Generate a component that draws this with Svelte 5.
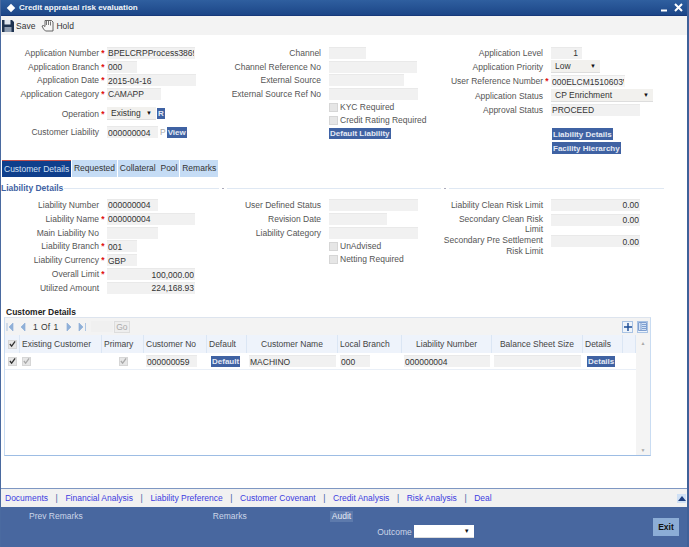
<script>
  const upper1 = [
    { label: 'Application Number', value: 'BPELCRPProcess3869', w: 88, star: true },
    { label: 'Application Branch', value: '000', w: 30, star: true },
    { label: 'Application Date', value: '2015-04-16', w: 89, star: true },
    { label: 'Application Category', value: 'CAMAPP', w: 54, star: true }
  ];
  const upper2 = [
    { label: 'Channel', value: '', w: 37 },
    { label: 'Channel Reference No', value: '', w: 88 },
    { label: 'External Source', value: '', w: 75 },
    { label: 'External Source Ref No', value: '', w: 89 }
  ];
  const lower1 = [
    { label: 'Liability Number', value: '000000004', w: 51 },
    { label: 'Liability Name', value: '000000004', w: 88, star: true },
    { label: 'Main Liability No', value: '', w: 51 },
    { label: 'Liability Branch', value: '001', w: 30, star: true },
    { label: 'Liability Currency', value: 'GBP', w: 30, star: true },
    { label: 'Overall Limit', value: '100,000.00', w: 88, star: true, num: true },
    { label: 'Utilized Amount', value: '224,168.93', w: 88, num: true }
  ];
  const lower2 = [
    { label: 'User Defined Status', value: '', w: 89 },
    { label: 'Revision Date', value: '', w: 58 },
    { label: 'Liability Category', value: '', w: 89 }
  ];
  const tabs = ['Customer Details', 'Requested', 'Collateral', 'Pool', 'Remarks'];
  const headers = ['Existing Customer', 'Primary', 'Customer No', 'Default', 'Customer Name', 'Local Branch', 'Liability Number', 'Balance Sheet Size', 'Details'];
  const links = ['Documents', 'Financial Analysis', 'Liability Preference', 'Customer Covenant', 'Credit Analysis', 'Risk Analysis', 'Deal'];
</script>

{#snippet field(f)}
  <div class="row">
    <span class="label">{f.label}</span>
    <span class="star">{f.star ? '*' : ''}</span>
    <input class="text" class:num={f.num} style="width:{f.w}px" value={f.value} readonly />
  </div>
{/snippet}

{#snippet check(label, on, dark)}
  <div class="check-row">
    <span class="check">
      {#if on}<svg viewBox="0 0 8 8" width="8" height="8"><path d="M1 4l2 2.5L7 1" fill="none" stroke={dark ? '#333' : '#aaa'} stroke-width="1.5" /></svg>{/if}
    </span>
    {#if label}<span>{label}</span>{/if}
  </div>
{/snippet}

<div class="window">
  <header class="title">
    <span class="diamond"></span>
    <span class="title-text">Credit appraisal risk evaluation</span>
    <svg class="win-btns" viewBox="0 0 28 10" width="28" height="10">
      <path d="M2 7.5h6" stroke="#fff" stroke-width="2" />
      <path d="M16 1l7 7M23 1l-7 7" stroke="#fff" stroke-width="2" />
    </svg>
  </header>

  <div class="toolbar">
    <svg viewBox="0 0 12 12" width="12" height="12">
      <path d="M0 0h10l2 2v10H0z" fill="#1e3350" />
      <path d="M2.5 0h6v4.5h-6z" fill="#dfe6ee" />
      <path d="M2.5 7h7v5h-7z" fill="#8d9cb0" />
    </svg>
    <span class="tool-text">Save</span>
    <svg class="hold-icon" viewBox="0 0 13 13" width="13" height="13">
      <path d="M4 1.5h6.5l1.5 1.500v9H4.500L2.500 10 1 7l1.500-.5L4 7.500z" fill="#f6f6f6" stroke="#555" stroke-width="0.9" />
      <path d="M5.500 2v4M7.500 2v4M9.500 2.500v4" stroke="#555" stroke-width="0.8" />
    </svg>
    <span class="tool-text">Hold</span>
  </div>

  <main class="content">
    <section class="cols upper">
      <div class="col">
        {#each upper1 as f}{@render field(f)}{/each}
        <div class="row op-row">
          <span class="label">Operation</span>
          <span class="star">*</span>
          <div class="select op-select"><span>Existing</span><i>▼</i></div>
          <button class="btn r-btn">R</button>
        </div>
        <div class="row cust-row">
          <span class="label">Customer Liability</span>
          <span class="star"></span>
          <input class="text" style="width:51px" value="000000004" readonly />
          <span class="p-mark">P</span>
          <button class="btn view-btn">View</button>
        </div>
      </div>
      <div class="col">
        {#each upper2 as f}{@render field(f)}{/each}
        <div class="checks upper-checks">
          {@render check('KYC Required')}
          {@render check('Credit Rating Required')}
          <button class="btn">Default Liability</button>
        </div>
      </div>
      <div class="col">
        <div class="row">
          <span class="label">Application Level</span><span class="star"></span>
          <input class="text num level" value="1" readonly />
        </div>
        <div class="row tall">
          <span class="label">Application Priority</span><span class="star"></span>
          <div class="select prio-select"><span>Low</span><i>▼</i></div>
        </div>
        <div class="row tall">
          <span class="label">User Reference Number</span><span class="star">*</span>
          <input class="text ref" value="000ELCM1510603W" readonly />
        </div>
        <div class="row">
          <span class="label">Application Status</span><span class="star"></span>
          <div class="select status-select"><span>CP Enrichment</span><i>▼</i></div>
        </div>
        <div class="row tall">
          <span class="label">Approval Status</span><span class="star"></span>
          <input class="text approval" value="PROCEED" readonly />
        </div>
        <div class="side-btns">
          <button class="btn">Liability Details</button>
          <button class="btn">Facility Hierarchy</button>
        </div>
      </div>
    </section>

    <nav class="tabs">
      {#each tabs as t, i}
        <span class="tab" class:active={i === 0}>{t}</span>
      {/each}
    </nav>

    <div class="legend">
      <span>Liability Details</span>
      <i class="rule first"></i>
      <i class="dot"></i>
      <i class="rule second"></i>
      <i class="dot"></i>
      <i class="rule third"></i>
    </div>

    <section class="cols lower">
      <div class="col">
        {#each lower1 as f}{@render field(f)}{/each}
      </div>
      <div class="col">
        {#each lower2 as f}{@render field(f)}{/each}
        <div class="checks">
          {@render check('UnAdvised')}
          {@render check('Netting Required')}
        </div>
      </div>
      <div class="col">
        {@render field({ label: 'Liability Clean Risk Limit', value: '0.00', w: 89, num: true })}
        <div class="row wrap">
          <span class="label">Secondary Clean Risk Limit</span><span class="star"></span>
          <input class="text num" style="width:89px" value="0.00" readonly />
        </div>
        <div class="row wrap">
          <span class="label">Secondary Pre Settlement Risk Limit</span><span class="star"></span>
          <input class="text num" style="width:89px" value="0.00" readonly />
        </div>
      </div>
    </section>

    <h2 class="grid-title">Customer Details</h2>
    <section class="grid-box">
      <div class="pager">
        <svg viewBox="0 0 20 8" width="20" height="8">
          <path d="M1 0v8M7 0L3 4l4 4zM19 0l-4 4 4 4z" fill="#8fb0d8" stroke="#8fb0d8" stroke-width="0.7" />
        </svg>
        <span class="page-count">1 Of 1</span>
        <svg viewBox="0 0 20 8" width="20" height="8">
          <path d="M1 0l4 4-4 4zM13 0l4 4-4 4zM19.500 0v8" fill="#8fb0d8" stroke="#8fb0d8" stroke-width="0.7" />
        </svg>
        <span class="page-input"></span>
        <span class="go">Go</span>
        <span class="icon-btn plus">
          <svg viewBox="0 0 9 9" width="8" height="8"><path d="M4.500 0v9M0 4.500h9" stroke="#1d4c96" stroke-width="1.6" /></svg>
        </span>
        <span class="icon-btn cols-btn">
          <svg viewBox="0 0 9 9" width="9" height="9"><path d="M.5.5h8v8h-8z" fill="#d3e2f5" stroke="#7f9fd0" /><path d="M3 1v7M4 2.500h4M4 4.500h4M4 6.500h4" stroke="#7f9fd0" stroke-width="1" /></svg>
        </span>
      </div>
      <div class="grid-body">
        <div class="table">
          <div class="grid-row head">
            <div class="cell first">{@render check('', true, true)}</div>
            {#each headers as h, i}
              <div class="cell" class:center={i === 4 || i === 6 || i === 7}>{h}</div>
            {/each}
            <div class="cell"></div>
          </div>
          <div class="grid-row body">
            <div class="cell first">{@render check('', true, true)}</div>
            <div class="cell">{@render check('', true)}</div>
            <div class="cell center">{@render check('', true)}</div>
            <div class="cell"><input class="text cust-no" value="000000059" readonly /></div>
            <div class="cell"><button class="btn">Default</button></div>
            <div class="cell"><input class="text fill" value="MACHINO" readonly /></div>
            <div class="cell"><input class="text branch" value="000" readonly /></div>
            <div class="cell"><input class="text fill" value="000000004" readonly /></div>
            <div class="cell"><input class="text fill" value="" readonly /></div>
            <div class="cell"><button class="btn">Details</button></div>
            <div class="cell"></div>
          </div>
        </div>
        <div class="scrollbar">
          <i>▲</i>
          <i>▼</i>
        </div>
      </div>
    </section>
  </main>

  <div class="links">
    {#each links as l, i}
      {#if i > 0}<span class="sep">|</span>{/if}
      <span>{l}</span>
    {/each}
    <span class="collapse">
      <svg viewBox="0 0 8 5" width="8" height="5"><path d="M0 5l4-5 4 5z" fill="#1d3f80" /></svg>
    </span>
  </div>

  <footer class="footer">
    <span class="prev">Prev Remarks</span>
    <span class="remarks">Remarks</span>
    <span class="audit">Audit</span>
    <div class="outcome">
      <span>Outcome</span>
      <div class="select out-select"><i>▼</i></div>
    </div>
    <button class="exit">Exit</button>
  </footer>
</div>

<style>
  :global(body) {
    margin: 0;
    background: #fff;
  }

  .window {
    width: 689px;
    height: 547px;
    box-sizing: border-box;
    display: flex;
    flex-direction: column;
    overflow: hidden;
    border-left: 1px solid #4a6aa0;
    border-right: 2px solid #3f6199;
    font: 8.5px "Liberation Sans", Arial, sans-serif;
    color: #555;
  }

  .title {
    height: 16px;
    flex: none;
    display: flex;
    align-items: center;
    background: linear-gradient(#2f5f9f, #1c4688);
    border-bottom: 1px solid #17397a;
    box-sizing: border-box;
    color: #fff;
    font-size: 8px;
    font-weight: bold;
    margin-left: -1px;
    padding-left: 6px;
  }

  .diamond {
    width: 6px;
    height: 6px;
    margin: 0 5px 0 2px;
    background: #fff;
    transform: rotate(45deg);
  }

  .title-text { opacity: 0.95; }
  .win-btns { margin-left: auto; }

  .toolbar {
    height: 19px;
    flex: none;
    display: flex;
    align-items: center;
    padding-left: 1px;
    background: #f3f3f3;
    color: #333;
  }

  .tool-text { margin-left: 2px; }
  .hold-icon { margin-left: 6px; }

  .content {
    flex: none;
    height: 453px;
    padding-top: 11px;
    box-sizing: border-box;
  }

  .cols { display: flex; }
  .col { width: 222px; flex: none; }
  .col:first-child { width: 221px; }

  .upper { height: 114px; }

  .row {
    display: flex;
    align-items: center;
    height: 13.7px;
  }

  .row.tall { height: 14.5px; }
  .lower .row { height: 13.85px; }

  .lower .row.wrap {
    height: 21.5px;
    box-sizing: border-box;
    align-items: flex-start;
    padding-top: 2px;
  }

  .col .row.wrap .label {
    width: 103px;
    margin-left: -4px;
    line-height: 10.5px;
  }

  .label {
    width: 98px;
    flex: none;
    text-align: right;
    line-height: 10px;
  }

  .col:not(:first-child) .label { width: 99px; }

  .star {
    width: 8px;
    flex: none;
    color: #e01010;
    font-weight: bold;
    text-align: center;
    line-height: 10px;
  }

  .text {
    height: 12px;
    box-sizing: border-box;
    padding: 0 1px;
    border: 0;
    outline: 0;
    border-top: 1px solid #e9e9e9;
    background: #f1f1f1;
    font: inherit;
    color: #333;
  }

  .num { text-align: right; }
  .level { width: 31px; padding-right: 4px; }
  .ref { width: 74px; background: #f6f6f6; }
  .approval { width: 89px; }
  .fill { width: 100%; }
  .branch { width: 30px; }
  .cust-no { width: 51px; }

  .select {
    display: flex;
    align-items: center;
    justify-content: space-between;
    box-sizing: border-box;
    height: 13px;
    padding: 0 4px;
    background: #f2f1ee;
    border-bottom: 1px solid #ddd;
    color: #333;
  }

  .select i {
    font-style: normal;
    font-size: 6px;
    color: #111;
  }

  .op-select { width: 49px; }
  .prio-select { width: 49px; }
  .status-select { width: 102px; }

  .op-row { margin-top: 6px; }
  .cust-row { margin-top: 5px; }

  .btn {
    height: 11px;
    padding: 0 1px;
    border: 0;
    background: #3f62a3;
    color: #e4e9f4;
    font: bold 8px "Liberation Sans", Arial, sans-serif;
    line-height: 11px;
    white-space: nowrap;
  }

  .cell .btn { margin-left: 2px; }
  .r-btn { width: 8px; margin-left: 1px; padding: 0; }
  .p-mark { margin: 0 1px 0 2px; color: #aaa; }
  .view-btn { width: 20px; padding: 0; }

  .checks button { display: block; }

  .check-row {
    display: flex;
    align-items: center;
    gap: 2px;
    height: 13px;
    margin-left: 107px;
  }

  .cell .check-row { margin-left: 0; }
  .cell.first { padding-left: 3px; padding-right: 0; }

  .check {
    width: 7px;
    height: 7px;
    flex: none;
    display: flex;
    align-items: center;
    justify-content: center;
    background: #e6e6e6;
    border: 1px solid #d6d6d6;
  }

  .upper-checks .btn { margin: 1px 0 0 107px; }

  .side-btns {
    display: flex;
    flex-direction: column;
    align-items: flex-start;
    gap: 2px;
    margin: 11.5px 0 0 108px;
  }

  .side-btns .btn { height: 12px; }

  .tabs {
    display: flex;
    gap: 0.75px;
    height: 17px;
    padding-left: 1px;
  }

  .tab {
    display: flex;
    align-items: center;
    padding: 0 2px;
    background: #c5dcf5;
    color: #333;
    line-height: 1;
  }

  .tab.active {
    background: #0f3f8c;
    border-top: 1px solid #c0504d;
    color: #cfe0f5;
  }

  .legend {
    display: flex;
    align-items: center;
    margin-top: 4px;
    height: 14px;
    color: #3f62a3;
    font-weight: bold;
  }

  .rule { height: 1px; background: #dfe8f3; display: block; }
  .rule.first { flex: 1; margin-left: 1px; }
  .rule.second { width: 214px; }
  .rule.third { width: 215px; margin-right: 23px; }
  .dot { width: 2px; height: 1px; background: #aab; margin: 1px 3px 0; }

  .lower { height: 110px; margin-top: 3px; }

  .grid-title {
    margin: 0;
    height: 9px;
    padding-left: 5px;
    color: #222;
    font: bold 8.5px/9px "Liberation Sans", Arial, sans-serif;
  }

  .grid-box {
    width: 647px;
    height: 139px;
    box-sizing: border-box;
    margin-left: 3px;
    border: 1px solid #c9dcf2;
    border-bottom: 1px solid #9dbde4;
    border-top-color: #dde4ee;
  }

  .pager {
    display: flex;
    align-items: center;
    height: 17px;
    padding-left: 1px;
    background: #f3f3f3;
    color: #333;
  }

  .page-count { margin: 0 8px 0 7px; word-spacing: 1px; }
  .page-input { width: 22px; height: 11px; margin-left: 5px; background: #f0f0f0; }

  .go {
    margin-left: 1px;
    padding: 1px 1px;
    border: 1px solid #ddd;
    color: #aaa;
    line-height: 8px;
    background: #eee;
  }

  .icon-btn {
    display: flex;
    align-items: center;
    justify-content: center;
    width: 11px;
    height: 12px;
    box-sizing: border-box;
    margin-left: 4px;
    border: 1px solid #a9c3e4;
    background: #eef4fb;
  }

  .plus { margin-left: auto; }
  .cols-btn { margin-right: 2px; }

  .grid-body {
    display: flex;
    height: 120px;
  }

  .table { width: 631px; flex: none; }

  .grid-row {
    display: grid;
    grid-template-columns: 15px 82px 42px 63px 40px 91px 64px 90px 91px 40px 13px;
  }

  .head {
    height: 18px;
    background: #eef3fb;
    color: #444;
  }

  .head .cell { border-right: 1px solid #dbe6f4; }

  .body {
    height: 17px;
    border-bottom: 1px solid #e9eff7;
    box-sizing: border-box;
  }

  .cell {
    display: flex;
    align-items: center;
    padding: 0 2px;
    min-width: 0;
    white-space: nowrap;
    overflow: hidden;
  }

  .center { justify-content: center; }

  .scrollbar {
    flex: 1;
    display: flex;
    flex-direction: column;
    justify-content: space-between;
    background: #f4f4f4;
    padding-top: 5px;
    text-align: center;
    color: #aaa;
    font-size: 5px;
  }

  .scrollbar i { font-style: normal; height: 8px; }

  .links {
    height: 19px;
    flex: none;
    display: flex;
    align-items: center;
    gap: 7.6px;
    padding-left: 4px;
    background: #f1f1f1;
    border-top: 1px solid #7e97c2;
    box-sizing: border-box;
    color: #3c3ce0;
  }

  .sep { color: #3f62a3; }

  .collapse {
    margin-left: auto;
    margin-right: 1px;
    width: 9px;
    height: 9px;
    display: flex;
    align-items: center;
    justify-content: center;
    background: #cfe0f5;
  }

  .footer {
    flex: none;
    height: 40px;
    display: flex;
    align-items: flex-start;
    margin-left: -1px;
    background: #48679f;
    color: #ccd6e8;
  }

  .prev { margin: 4px 0 0 29px; }
  .remarks { margin: 4px 0 0 130px; }

  .audit {
    margin: 4px 0 0 83px;
    padding: 0 2px;
    height: 11px;
    line-height: 11px;
    background: #5d7aac;
    color: #e4e9f4;
  }

  .outcome {
    display: flex;
    align-items: center;
    gap: 2px;
    margin: 18px 0 0 24px;
  }

  .out-select {
    width: 60px;
    background: #fff;
    justify-content: flex-end;
  }

  .exit {
    width: 26px;
    height: 18px;
    margin: 11px 8px 0 auto;
    padding: 0;
    border: 0;
    background: #8cadd6;
    color: #111;
    font: bold 8.5px "Liberation Sans", Arial, sans-serif;
  }
</style>
